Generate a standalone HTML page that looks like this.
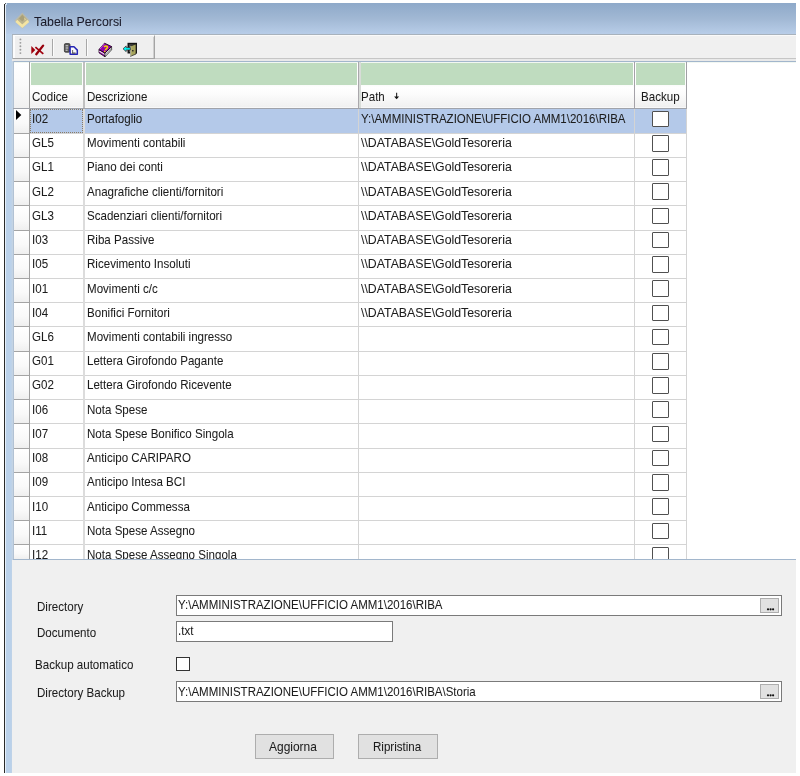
<!DOCTYPE html>
<html><head><meta charset="utf-8"><title>Tabella Percorsi</title><style>
*{margin:0;padding:0;box-sizing:border-box}
html,body{width:800px;height:776px;overflow:hidden;background:#fff;font-family:"Liberation Sans",sans-serif;color:#000}
.a{position:absolute}
.t{position:absolute;white-space:pre;font-size:11.5px;line-height:14px;color:#1c1c1c;transform-origin:0 0;-webkit-text-stroke:0.05px #1c1c1c}
#w{position:absolute;left:0;top:0;width:800px;height:776px;will-change:transform}
</style></head><body><div id="w">
<div class="a" style="left:4px;top:4px;width:1px;height:769px;background:#2a2a2a"></div>
<div class="a" style="left:5px;top:4px;width:1px;height:769px;background:#e6f0fa"></div>
<div class="a" style="left:6px;top:34px;width:7px;height:739px;background:linear-gradient(90deg,#bad1ea 70%,#c6d4e2)"></div>
<div class="a" style="left:5px;top:3px;width:791px;height:31px;background:linear-gradient(#8ea9c9,#a1b8d4 50%,#b8cde8)"></div>
<div class="a" style="left:5px;top:5px;width:1px;height:29px;background:#e8f0f8"></div>
<div class="a" style="left:5px;top:3px;width:2px;height:2px;background:#d6e4f2"></div>
<div class="a" style="left:4.6px;top:3px;width:1.4px;height:1.4px;background:#333;border-radius:1px"></div>
<div class="a" style="left:12px;top:34px;width:784px;height:1px;background:#a8b2bc"></div>
<svg class="a" style="left:12px;top:10px" width="20" height="20" viewBox="0 0 20 20"><path d="M10.3 2.4 L17.8 10.6 L10.3 18.8 L2.4 10.6Z" fill="#c0bca6" opacity="0.75"/><path d="M10.3 3.8 L16.2 10.2 L10.3 15.8 L4.4 10.2Z" fill="#bdb48e"/><path d="M10.3 4.8 L13.6 8.4 L10.3 11.6 L7 8.4Z" fill="#a9a07a"/><path d="M12 7.2 L14.2 9.4 L12.6 10.6Z" fill="#e0d298"/><path d="M4.3 10.9 L10.3 16.2 L16.3 10.9" fill="none" stroke="#f4e4a2" stroke-width="2.8"/></svg>
<div class="a" style="left:12px;top:35px;width:784px;height:26px;background:#f0f0f0"></div>
<div class="a" style="left:12px;top:35px;width:784px;height:1px;background:#fafafa"></div>
<div class="a" style="left:12px;top:58px;width:784px;height:1px;background:#c6c6c6"></div>
<div class="a" style="left:12px;top:59px;width:784px;height:2px;background:#e9e9e9"></div>
<div class="a" style="left:12px;top:35px;width:143px;height:24px;background:#efefef;border-left:1px solid #fdfdfd;border-top:1px solid #fdfdfd;border-right:1px solid #a4a4a4;border-bottom:1px solid #a4a4a4"></div>
<div class="a" style="left:153px;top:37px;width:1px;height:21px;background:#cfcfcf"></div>
<svg class="a" style="left:17px;top:36px" width="7" height="20" viewBox="0 0 7 20"><circle cx="3.4" cy="3.40" r="0.95" fill="#9c9c9c"/><circle cx="3.4" cy="6.83" r="0.95" fill="#9c9c9c"/><circle cx="3.4" cy="10.26" r="0.95" fill="#9c9c9c"/><circle cx="3.4" cy="13.69" r="0.95" fill="#9c9c9c"/><circle cx="3.4" cy="17.12" r="0.95" fill="#9c9c9c"/></svg>
<div class="a" style="left:12px;top:35px;width:1px;height:24px;background:#b4bcc4"></div>
<div class="a" style="left:13px;top:36px;width:2px;height:22px;background:#fcfcfc"></div>
<div class="a" style="left:52px;top:39px;width:1px;height:17px;background:#a8a8a8"></div>
<div class="a" style="left:53px;top:39px;width:1px;height:17px;background:#fcfcfc"></div>
<div class="a" style="left:86px;top:39px;width:1px;height:17px;background:#a8a8a8"></div>
<div class="a" style="left:87px;top:39px;width:1px;height:17px;background:#fcfcfc"></div>
<svg class="a" style="left:30px;top:44px" width="15" height="12" viewBox="0 0 15 12"><path d="M1.3 2.1 L5.3 6 L1.3 9.9 Z" fill="#a0000c"/><path d="M5.4 3.2 L13.3 9.9" stroke="#a0000e" stroke-width="1.7"/><path d="M13.1 1.6 L6.3 10.2" stroke="#98000c" stroke-width="2.3" stroke-linecap="round"/></svg>
<svg class="a" style="left:63px;top:42px" width="17" height="14" viewBox="0 0 17 14"><rect x="1.4" y="1.6" width="5.6" height="8.6" rx="1.2" fill="#5a5a5a" stroke="#333" stroke-width="0.8"/><path d="M2.6 3.8 H5.2 M2.6 6 H5.2 M2.6 8.2 H4.6" stroke="#f0f0f0" stroke-width="0.9"/><path d="M7.1 4.8 H11 L14.3 8.1 V12.2 H7.1Z" fill="#f8f8f8" stroke="#2626b4" stroke-width="1.5" stroke-linejoin="round"/><path d="M9 11.1 H12.6" stroke="#444" stroke-width="1.1"/><path d="M9.6 8 V11" stroke="#555" stroke-width="0.9"/></svg>
<svg class="a" style="left:96px;top:40px" width="20" height="18" viewBox="0 0 20 18"><path d="M3 9.5 L9 13 L9 16.8 L3 12.8Z" fill="#8c00a0" stroke="#1a001a" stroke-width="0.8" stroke-linejoin="round"/><path d="M3.3 11 L9 14.6" stroke="#f0f0f0" stroke-width="1.1"/><path d="M9 13 L15.6 6.6 L15.6 9.8 L9 16.8Z" fill="#ececec" stroke="#222" stroke-width="0.8" stroke-linejoin="round"/><path d="M9.5 14.6 L15.2 8.8" stroke="#909090" stroke-width="0.8"/><path d="M8.5 3.2 L15.6 6.6 L9 13 L3 9.5Z" fill="#9400ac" stroke="#1e001e" stroke-width="0.9" stroke-linejoin="round"/><path d="M8.3 3.9 L3.8 9.2" stroke="#c860d8" stroke-width="1"/><path d="M8.1 7.1 Q9.6 5.3 11.2 6.5 Q12 7.9 10 9.1 L9.4 10.1" fill="none" stroke="#f2d200" stroke-width="1.6"/><circle cx="8.7" cy="11.3" r="0.85" fill="#e8c800"/></svg>
<svg class="a" style="left:120px;top:40px" width="20" height="18" viewBox="0 0 20 18"><path d="M7.5 2.8 H17 V13.5 H7.5Z" fill="#141414"/><path d="M9 4.3 H15.5 V12 H9Z" fill="#4a4a4a"/><path d="M10.5 6 L16 4 V14 L10.5 16.3Z" fill="#a6a45c" stroke="#1a1a1a" stroke-width="0.7"/><path d="M10.7 6.2 V16" stroke="#e4e4cc" stroke-width="0.8"/><rect x="12.1" y="10" width="1.4" height="1.4" fill="#222"/><path d="M3 8.8 L6.2 5.9 V7.6 H10.3 V10 H6.2 V11.7Z" fill="#00f4f4" stroke="#3a2020" stroke-width="0.7" stroke-linejoin="round"/></svg>
<div class="a" style="left:13px;top:61px;width:783px;height:499px;background:#fff"></div>
<div class="a" style="left:13px;top:61px;width:783px;height:1px;background:#a2b6cc"></div>
<div class="a" style="left:13px;top:62px;width:783px;height:1px;background:#f2f7f2"></div>
<div class="a" style="left:13px;top:61px;width:1px;height:499px;background:#b2c2d4"></div>
<div class="a" style="left:14px;top:63px;width:15px;height:45px;background:linear-gradient(#fff,#fafafa 50%,#f0f0f0)"></div>
<div class="a" style="left:31px;top:63px;width:51px;height:22px;background:#bfdcbf"></div>
<div class="a" style="left:86px;top:63px;width:271px;height:22px;background:#bfdcbf"></div>
<div class="a" style="left:361px;top:63px;width:272px;height:22px;background:#bfdcbf"></div>
<div class="a" style="left:636px;top:63px;width:49px;height:22px;background:#bfdcbf"></div>
<div class="a" style="left:30px;top:85px;width:656px;height:22px;background:linear-gradient(#fafcfa,#fff 10%,#fcfcfc 40%,#f0f0f0)"></div>
<div class="a" style="left:30px;top:107px;width:656px;height:1px;background:#f8f8f8"></div>
<div class="a" style="left:13px;top:108px;width:674px;height:1px;background:#a0a3aa"></div>
<div class="a" style="left:29px;top:62px;width:1px;height:46px;background:#a0a0a0"></div>
<div class="a" style="left:83px;top:62px;width:2px;height:46px;background:#c0c0c0"></div>
<div class="a" style="left:358px;top:62px;width:1px;height:46px;background:#aaa8ac"></div>
<div class="a" style="left:359px;top:62px;width:2px;height:46px;background:#d8dcd8"></div>
<div class="a" style="left:634px;top:62px;width:1px;height:46px;background:#a4a2a8"></div>
<div class="a" style="left:686px;top:62px;width:1px;height:46px;background:#a0a0a4"></div>
<div class="t" style="left:32.00px;top:90.00px;font-size:13.2px;transform:scaleX(0.8770)">Codice</div>
<div class="t" style="left:86.70px;top:90.00px;font-size:13.2px;transform:scaleX(0.8770)">Descrizione</div>
<div class="t" style="left:361.40px;top:90.00px;font-size:13.2px;transform:scaleX(0.8770)">Path</div>
<svg class="a" style="left:393px;top:92px" width="7" height="8" viewBox="0 0 7 8"><path d="M3.6 0.8 V5" stroke="#333" stroke-width="1.2"/><path d="M1.1 4.4 L6.1 4.4 L3.6 7.3Z" fill="#111"/></svg>
<div class="t" style="left:640.80px;top:90.00px;font-size:13.2px;transform:scaleX(0.8770)">Backup</div>
<div class="a" style="left:30px;top:109px;width:656px;height:24px;background:#b4c9e9"></div>
<div class="a" style="left:14px;top:109px;width:15px;height:24px;background:linear-gradient(#fff,#f9f9f9 60%,#efefef)"></div>
<div class="a" style="left:14px;top:133px;width:15px;height:1px;background:#a4a4a4"></div>
<div class="a" style="left:30px;top:133px;width:656px;height:1px;background:#d4d4d4"></div>
<div class="t" style="left:32.00px;top:112.00px;font-size:13.2px;transform:scaleX(0.8770)">I02</div>
<div class="t" style="left:86.80px;top:112.00px;font-size:13.2px;transform:scaleX(0.8770)">Portafoglio</div>
<div class="t" style="left:361.20px;top:112.00px;font-size:13.2px;transform:scaleX(0.8719)">Y:\AMMINISTRAZIONE\UFFICIO AMM1\2016\RIBA</div>
<div class="a" style="left:652px;top:110.80px;width:16.5px;height:16.5px;border:1px solid #505050;border-radius:1px;background:#fff"></div>
<div class="a" style="left:14px;top:134px;width:15px;height:23px;background:linear-gradient(#fff,#f9f9f9 60%,#efefef)"></div>
<div class="a" style="left:14px;top:157px;width:15px;height:1px;background:#a4a4a4"></div>
<div class="a" style="left:30px;top:157px;width:656px;height:1px;background:#d4d4d4"></div>
<div class="t" style="left:32.00px;top:136.00px;font-size:13.2px;transform:scaleX(0.8770)">GL5</div>
<div class="t" style="left:86.80px;top:136.00px;font-size:13.2px;transform:scaleX(0.8770)">Movimenti contabili</div>
<div class="t" style="left:361.20px;top:136.00px;font-size:13.2px;transform:scaleX(0.9334)">\\DATABASE\GoldTesoreria</div>
<div class="a" style="left:652px;top:135.02px;width:16.5px;height:16.5px;border:1px solid #505050;border-radius:1px;background:#fff"></div>
<div class="a" style="left:14px;top:158px;width:15px;height:23px;background:linear-gradient(#fff,#f9f9f9 60%,#efefef)"></div>
<div class="a" style="left:14px;top:181px;width:15px;height:1px;background:#a4a4a4"></div>
<div class="a" style="left:30px;top:181px;width:656px;height:1px;background:#d4d4d4"></div>
<div class="t" style="left:32.00px;top:160.00px;font-size:13.2px;transform:scaleX(0.8770)">GL1</div>
<div class="t" style="left:86.80px;top:160.00px;font-size:13.2px;transform:scaleX(0.8770)">Piano dei conti</div>
<div class="t" style="left:361.20px;top:160.00px;font-size:13.2px;transform:scaleX(0.9334)">\\DATABASE\GoldTesoreria</div>
<div class="a" style="left:652px;top:159.24px;width:16.5px;height:16.5px;border:1px solid #505050;border-radius:1px;background:#fff"></div>
<div class="a" style="left:14px;top:182px;width:15px;height:23px;background:linear-gradient(#fff,#f9f9f9 60%,#efefef)"></div>
<div class="a" style="left:14px;top:205px;width:15px;height:1px;background:#a4a4a4"></div>
<div class="a" style="left:30px;top:205px;width:656px;height:1px;background:#d4d4d4"></div>
<div class="t" style="left:32.00px;top:185.00px;font-size:13.2px;transform:scaleX(0.8770)">GL2</div>
<div class="t" style="left:86.80px;top:185.00px;font-size:13.2px;transform:scaleX(0.8770)">Anagrafiche clienti/fornitori</div>
<div class="t" style="left:361.20px;top:185.00px;font-size:13.2px;transform:scaleX(0.9334)">\\DATABASE\GoldTesoreria</div>
<div class="a" style="left:652px;top:183.46px;width:16.5px;height:16.5px;border:1px solid #505050;border-radius:1px;background:#fff"></div>
<div class="a" style="left:14px;top:206px;width:15px;height:24px;background:linear-gradient(#fff,#f9f9f9 60%,#efefef)"></div>
<div class="a" style="left:14px;top:230px;width:15px;height:1px;background:#a4a4a4"></div>
<div class="a" style="left:30px;top:230px;width:656px;height:1px;background:#d4d4d4"></div>
<div class="t" style="left:32.00px;top:209.00px;font-size:13.2px;transform:scaleX(0.8770)">GL3</div>
<div class="t" style="left:86.80px;top:209.00px;font-size:13.2px;transform:scaleX(0.8770)">Scadenziari clienti/fornitori</div>
<div class="t" style="left:361.20px;top:209.00px;font-size:13.2px;transform:scaleX(0.9334)">\\DATABASE\GoldTesoreria</div>
<div class="a" style="left:652px;top:207.68px;width:16.5px;height:16.5px;border:1px solid #505050;border-radius:1px;background:#fff"></div>
<div class="a" style="left:14px;top:231px;width:15px;height:23px;background:linear-gradient(#fff,#f9f9f9 60%,#efefef)"></div>
<div class="a" style="left:14px;top:254px;width:15px;height:1px;background:#a4a4a4"></div>
<div class="a" style="left:30px;top:254px;width:656px;height:1px;background:#d4d4d4"></div>
<div class="t" style="left:32.00px;top:233.00px;font-size:13.2px;transform:scaleX(0.8770)">I03</div>
<div class="t" style="left:86.80px;top:233.00px;font-size:13.2px;transform:scaleX(0.8770)">Riba Passive</div>
<div class="t" style="left:361.20px;top:233.00px;font-size:13.2px;transform:scaleX(0.9334)">\\DATABASE\GoldTesoreria</div>
<div class="a" style="left:652px;top:231.90px;width:16.5px;height:16.5px;border:1px solid #505050;border-radius:1px;background:#fff"></div>
<div class="a" style="left:14px;top:255px;width:15px;height:23px;background:linear-gradient(#fff,#f9f9f9 60%,#efefef)"></div>
<div class="a" style="left:14px;top:278px;width:15px;height:1px;background:#a4a4a4"></div>
<div class="a" style="left:30px;top:278px;width:656px;height:1px;background:#d4d4d4"></div>
<div class="t" style="left:32.00px;top:257.00px;font-size:13.2px;transform:scaleX(0.8770)">I05</div>
<div class="t" style="left:86.80px;top:257.00px;font-size:13.2px;transform:scaleX(0.8770)">Ricevimento Insoluti</div>
<div class="t" style="left:361.20px;top:257.00px;font-size:13.2px;transform:scaleX(0.9334)">\\DATABASE\GoldTesoreria</div>
<div class="a" style="left:652px;top:256.12px;width:16.5px;height:16.5px;border:1px solid #505050;border-radius:1px;background:#fff"></div>
<div class="a" style="left:14px;top:279px;width:15px;height:23px;background:linear-gradient(#fff,#f9f9f9 60%,#efefef)"></div>
<div class="a" style="left:14px;top:302px;width:15px;height:1px;background:#a4a4a4"></div>
<div class="a" style="left:30px;top:302px;width:656px;height:1px;background:#d4d4d4"></div>
<div class="t" style="left:32.00px;top:282.00px;font-size:13.2px;transform:scaleX(0.8770)">I01</div>
<div class="t" style="left:86.80px;top:282.00px;font-size:13.2px;transform:scaleX(0.8770)">Movimenti c/c</div>
<div class="t" style="left:361.20px;top:282.00px;font-size:13.2px;transform:scaleX(0.9334)">\\DATABASE\GoldTesoreria</div>
<div class="a" style="left:652px;top:280.34px;width:16.5px;height:16.5px;border:1px solid #505050;border-radius:1px;background:#fff"></div>
<div class="a" style="left:14px;top:303px;width:15px;height:23px;background:linear-gradient(#fff,#f9f9f9 60%,#efefef)"></div>
<div class="a" style="left:14px;top:326px;width:15px;height:1px;background:#a4a4a4"></div>
<div class="a" style="left:30px;top:326px;width:656px;height:1px;background:#d4d4d4"></div>
<div class="t" style="left:32.00px;top:306.00px;font-size:13.2px;transform:scaleX(0.8770)">I04</div>
<div class="t" style="left:86.80px;top:306.00px;font-size:13.2px;transform:scaleX(0.8770)">Bonifici Fornitori</div>
<div class="t" style="left:361.20px;top:306.00px;font-size:13.2px;transform:scaleX(0.9334)">\\DATABASE\GoldTesoreria</div>
<div class="a" style="left:652px;top:304.56px;width:16.5px;height:16.5px;border:1px solid #505050;border-radius:1px;background:#fff"></div>
<div class="a" style="left:14px;top:327px;width:15px;height:24px;background:linear-gradient(#fff,#f9f9f9 60%,#efefef)"></div>
<div class="a" style="left:14px;top:351px;width:15px;height:1px;background:#a4a4a4"></div>
<div class="a" style="left:30px;top:351px;width:656px;height:1px;background:#d4d4d4"></div>
<div class="t" style="left:32.00px;top:330.00px;font-size:13.2px;transform:scaleX(0.8770)">GL6</div>
<div class="t" style="left:86.80px;top:330.00px;font-size:13.2px;transform:scaleX(0.8770)">Movimenti contabili ingresso</div>
<div class="a" style="left:652px;top:328.78px;width:16.5px;height:16.5px;border:1px solid #505050;border-radius:1px;background:#fff"></div>
<div class="a" style="left:14px;top:352px;width:15px;height:23px;background:linear-gradient(#fff,#f9f9f9 60%,#efefef)"></div>
<div class="a" style="left:14px;top:375px;width:15px;height:1px;background:#a4a4a4"></div>
<div class="a" style="left:30px;top:375px;width:656px;height:1px;background:#d4d4d4"></div>
<div class="t" style="left:32.00px;top:354.00px;font-size:13.2px;transform:scaleX(0.8770)">G01</div>
<div class="t" style="left:86.80px;top:354.00px;font-size:13.2px;transform:scaleX(0.8770)">Lettera Girofondo Pagante</div>
<div class="a" style="left:652px;top:353.00px;width:16.5px;height:16.5px;border:1px solid #505050;border-radius:1px;background:#fff"></div>
<div class="a" style="left:14px;top:376px;width:15px;height:23px;background:linear-gradient(#fff,#f9f9f9 60%,#efefef)"></div>
<div class="a" style="left:14px;top:399px;width:15px;height:1px;background:#a4a4a4"></div>
<div class="a" style="left:30px;top:399px;width:656px;height:1px;background:#d4d4d4"></div>
<div class="t" style="left:32.00px;top:378.00px;font-size:13.2px;transform:scaleX(0.8770)">G02</div>
<div class="t" style="left:86.80px;top:378.00px;font-size:13.2px;transform:scaleX(0.8770)">Lettera Girofondo Ricevente</div>
<div class="a" style="left:652px;top:377.22px;width:16.5px;height:16.5px;border:1px solid #505050;border-radius:1px;background:#fff"></div>
<div class="a" style="left:14px;top:400px;width:15px;height:23px;background:linear-gradient(#fff,#f9f9f9 60%,#efefef)"></div>
<div class="a" style="left:14px;top:423px;width:15px;height:1px;background:#a4a4a4"></div>
<div class="a" style="left:30px;top:423px;width:656px;height:1px;background:#d4d4d4"></div>
<div class="t" style="left:32.00px;top:403.00px;font-size:13.2px;transform:scaleX(0.8770)">I06</div>
<div class="t" style="left:86.80px;top:403.00px;font-size:13.2px;transform:scaleX(0.8770)">Nota Spese</div>
<div class="a" style="left:652px;top:401.44px;width:16.5px;height:16.5px;border:1px solid #505050;border-radius:1px;background:#fff"></div>
<div class="a" style="left:14px;top:424px;width:15px;height:24px;background:linear-gradient(#fff,#f9f9f9 60%,#efefef)"></div>
<div class="a" style="left:14px;top:448px;width:15px;height:1px;background:#a4a4a4"></div>
<div class="a" style="left:30px;top:448px;width:656px;height:1px;background:#d4d4d4"></div>
<div class="t" style="left:32.00px;top:427.00px;font-size:13.2px;transform:scaleX(0.8770)">I07</div>
<div class="t" style="left:86.80px;top:427.00px;font-size:13.2px;transform:scaleX(0.8770)">Nota Spese Bonifico Singola</div>
<div class="a" style="left:652px;top:425.66px;width:16.5px;height:16.5px;border:1px solid #505050;border-radius:1px;background:#fff"></div>
<div class="a" style="left:14px;top:449px;width:15px;height:23px;background:linear-gradient(#fff,#f9f9f9 60%,#efefef)"></div>
<div class="a" style="left:14px;top:472px;width:15px;height:1px;background:#a4a4a4"></div>
<div class="a" style="left:30px;top:472px;width:656px;height:1px;background:#d4d4d4"></div>
<div class="t" style="left:32.00px;top:451.00px;font-size:13.2px;transform:scaleX(0.8770)">I08</div>
<div class="t" style="left:86.80px;top:451.00px;font-size:13.2px;transform:scaleX(0.8770)">Anticipo CARIPARO</div>
<div class="a" style="left:652px;top:449.88px;width:16.5px;height:16.5px;border:1px solid #505050;border-radius:1px;background:#fff"></div>
<div class="a" style="left:14px;top:473px;width:15px;height:23px;background:linear-gradient(#fff,#f9f9f9 60%,#efefef)"></div>
<div class="a" style="left:14px;top:496px;width:15px;height:1px;background:#a4a4a4"></div>
<div class="a" style="left:30px;top:496px;width:656px;height:1px;background:#d4d4d4"></div>
<div class="t" style="left:32.00px;top:475.00px;font-size:13.2px;transform:scaleX(0.8770)">I09</div>
<div class="t" style="left:86.80px;top:475.00px;font-size:13.2px;transform:scaleX(0.8770)">Anticipo Intesa BCI</div>
<div class="a" style="left:652px;top:474.10px;width:16.5px;height:16.5px;border:1px solid #505050;border-radius:1px;background:#fff"></div>
<div class="a" style="left:14px;top:497px;width:15px;height:23px;background:linear-gradient(#fff,#f9f9f9 60%,#efefef)"></div>
<div class="a" style="left:14px;top:520px;width:15px;height:1px;background:#a4a4a4"></div>
<div class="a" style="left:30px;top:520px;width:656px;height:1px;background:#d4d4d4"></div>
<div class="t" style="left:32.00px;top:500.00px;font-size:13.2px;transform:scaleX(0.8770)">I10</div>
<div class="t" style="left:86.80px;top:500.00px;font-size:13.2px;transform:scaleX(0.8770)">Anticipo Commessa</div>
<div class="a" style="left:652px;top:498.32px;width:16.5px;height:16.5px;border:1px solid #505050;border-radius:1px;background:#fff"></div>
<div class="a" style="left:14px;top:521px;width:15px;height:23px;background:linear-gradient(#fff,#f9f9f9 60%,#efefef)"></div>
<div class="a" style="left:14px;top:544px;width:15px;height:1px;background:#a4a4a4"></div>
<div class="a" style="left:30px;top:544px;width:656px;height:1px;background:#d4d4d4"></div>
<div class="t" style="left:32.00px;top:524.00px;font-size:13.2px;transform:scaleX(0.8770)">I11</div>
<div class="t" style="left:86.80px;top:524.00px;font-size:13.2px;transform:scaleX(0.8770)">Nota Spese Assegno</div>
<div class="a" style="left:652px;top:522.54px;width:16.5px;height:16.5px;border:1px solid #505050;border-radius:1px;background:#fff"></div>
<div class="a" style="left:14px;top:545px;width:15px;height:14px;background:linear-gradient(#fff,#f9f9f9 60%,#efefef)"></div>
<div class="t" style="left:32.00px;top:548.00px;font-size:13.2px;transform:scaleX(0.8770)">I12</div>
<div class="t" style="left:86.80px;top:548.00px;font-size:13.2px;transform:scaleX(0.8770)">Nota Spese Assegno Singola</div>
<div class="a" style="left:652px;top:546.76px;width:16.5px;height:16.5px;border:1px solid #505050;border-radius:1px;background:#fff"></div>
<div class="a" style="left:29px;top:109px;width:1px;height:450px;background:#a0a0a0"></div>
<div class="a" style="left:83px;top:109px;width:2px;height:450px;background:#dcdcdc"></div>
<div class="a" style="left:358px;top:109px;width:1px;height:450px;background:#d4d4d4"></div>
<div class="a" style="left:634px;top:109px;width:1px;height:450px;background:#d4d4d4"></div>
<div class="a" style="left:686px;top:109px;width:1px;height:450px;background:#d4d4d4"></div>
<div class="a" style="left:30px;top:109px;width:53px;height:24px;border:1px dotted #8a7c66"></div>
<svg class="a" style="left:16px;top:110px" width="6" height="10" viewBox="0 0 6 10"><path d="M0 0 L5.3 5 L0 10Z" fill="#000"/></svg>
<div class="a" style="left:13px;top:559px;width:783px;height:1px;background:#a2b6cc"></div>
<div class="a" style="left:12px;top:560px;width:784px;height:213px;background:#f0f0f0"></div>
<div class="t" style="left:37.40px;top:600.00px;font-size:13.2px;transform:scaleX(0.8770)">Directory</div>
<div class="t" style="left:37.20px;top:626.00px;font-size:13.2px;transform:scaleX(0.8770)">Documento</div>
<div class="t" style="left:35.20px;top:658.00px;font-size:13.2px;transform:scaleX(0.8770)">Backup automatico</div>
<div class="t" style="left:37.45px;top:686.00px;font-size:13.2px;transform:scaleX(0.8770)">Directory Backup</div>
<div class="a" style="left:176px;top:595px;width:606px;height:21px;border:1px solid #7a7a7a;background:#fff"></div>
<div class="t" style="left:177.60px;top:598.00px;font-size:13.2px;transform:scaleX(0.8719)">Y:\AMMINISTRAZIONE\UFFICIO AMM1\2016\RIBA</div>
<div class="a" style="left:760px;top:598px;width:19px;height:15px;border:1px solid #adadad;background:#e1e1e1"></div>
<svg class="a" style="left:766px;top:607px" width="10" height="4" viewBox="0 0 10 4"><circle cx="2" cy="2.3" r="1.1" fill="#111"/><circle cx="4.6" cy="2.3" r="1.1" fill="#111"/><circle cx="7.1" cy="2.3" r="1.1" fill="#111"/></svg>
<div class="a" style="left:176px;top:621px;width:217px;height:21px;border:1px solid #7a7a7a;background:#fff"></div>
<div class="t" style="left:177.60px;top:624.00px;font-size:13.2px;transform:scaleX(0.8770)">.txt</div>
<div class="a" style="left:176px;top:657px;width:14px;height:14px;border:1px solid #333;background:#fff"></div>
<div class="a" style="left:176px;top:681px;width:606px;height:21px;border:1px solid #7a7a7a;background:#fff"></div>
<div class="t" style="left:177.60px;top:685.00px;font-size:13.2px;transform:scaleX(0.8719)">Y:\AMMINISTRAZIONE\UFFICIO AMM1\2016\RIBA\Storia</div>
<div class="a" style="left:760px;top:684px;width:19px;height:15px;border:1px solid #adadad;background:#e1e1e1"></div>
<svg class="a" style="left:766px;top:693px" width="10" height="4" viewBox="0 0 10 4"><circle cx="2" cy="2.3" r="1.1" fill="#111"/><circle cx="4.6" cy="2.3" r="1.1" fill="#111"/><circle cx="7.1" cy="2.3" r="1.1" fill="#111"/></svg>
<div class="a" style="left:255px;top:734px;width:79px;height:25px;border:1px solid #adadad;background:#e1e1e1"></div>
<div class="t" style="left:269.20px;top:740.00px;font-size:13.2px;transform:scaleX(0.9072)">Aggiorna</div>
<div class="a" style="left:358px;top:734px;width:80px;height:25px;border:1px solid #adadad;background:#e1e1e1"></div>
<div class="t" style="left:373.40px;top:740.00px;font-size:13.2px;transform:scaleX(0.8770)">Ripristina</div>
</div><div class="t" style="left:34.20px;top:15.00px;font-size:13.4px;transform:scaleX(0.9223);color:#1a1a2a">Tabella Percorsi</div></body></html>
